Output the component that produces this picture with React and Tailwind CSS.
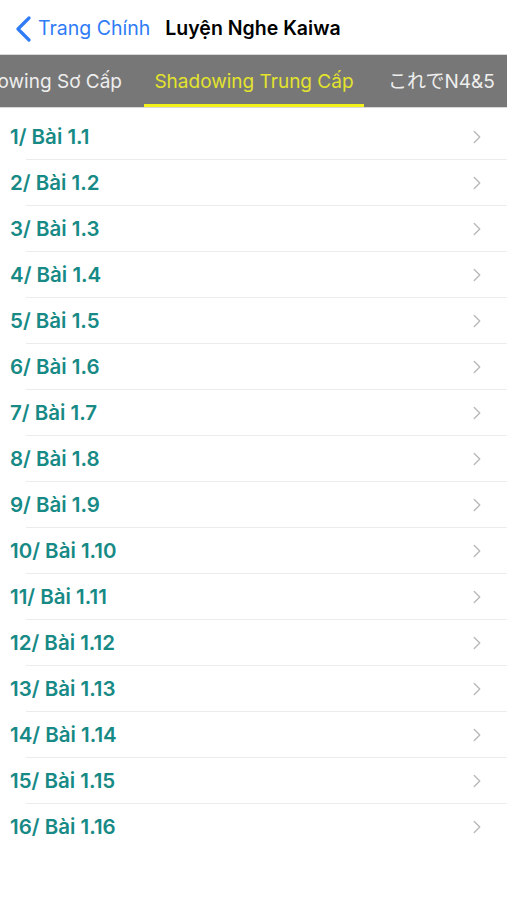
import { ChevronRight } from "lucide-react";

const lessons = Array.from({ length: 16 }, (_, i) => `${i + 1}/ Bài 1.${i + 1}`);

const NavBar = () => (
  <div className="flex h-[54px] items-center bg-white pt-[3px] pl-[15px]">
    <svg width="18" height="26" viewBox="0 0 18 26" className="mr-[5px]">
      <path d="M14 2 L3 13 L14 24" fill="none" stroke="#2f7cf6" strokeWidth="3.2" strokeLinecap="round" strokeLinejoin="round" />
    </svg>
    <span className="text-[19.5px] text-[#2f7cf6]">Trang Chính</span>
    <span className="ml-[15px] text-[19.5px] font-semibold text-black">Luyện Nghe Kaiwa</span>
  </div>
);

const TabBar = () => (
  <div className="flex h-[54px] overflow-hidden border-t border-b border-[#d8d8d8] bg-[#777777] pt-[3px] text-[19px]">
    <div className="flex w-[144px] shrink-0 items-center justify-end pr-[22px] whitespace-nowrap text-[#eeeeee]">
      Shadowing Sơ Cấp
    </div>
    <div className="relative flex w-[220px] shrink-0 items-center justify-center whitespace-nowrap text-[#e3e32e]">
      Shadowing Trung Cấp
      <div className="absolute -bottom-[1px] left-0 right-0 h-[4px] bg-[#f2f21a]" />
    </div>
    <div className="flex shrink-0 items-center pl-[24px] whitespace-nowrap text-[#eeeeee]">
      これでN4&5
    </div>
  </div>
);

export default function App() {
  return (
    <div className="h-[900px] w-[507px] bg-white font-['Inter','Noto_Sans_CJK_JP',sans-serif]">
      <NavBar />
      <TabBar />
      <div className="pt-[6px]">
        {lessons.map((title, i) => (
          <div
            key={title}
            className={`relative flex h-[46px] items-center pl-[10px] pr-[19px] ${
              i < lessons.length - 1
                ? "after:absolute after:bottom-0 after:left-[26px] after:right-0 after:h-px after:bg-[#ececec]"
                : ""
            }`}
          >
            <span className="flex-1 pt-[1px] text-[20.5px] font-semibold text-[#178a86]">{title}</span>
            <ChevronRight size={22} strokeWidth={1.5} color="#b9b9b9" />
          </div>
        ))}
      </div>
    </div>
  );
}
